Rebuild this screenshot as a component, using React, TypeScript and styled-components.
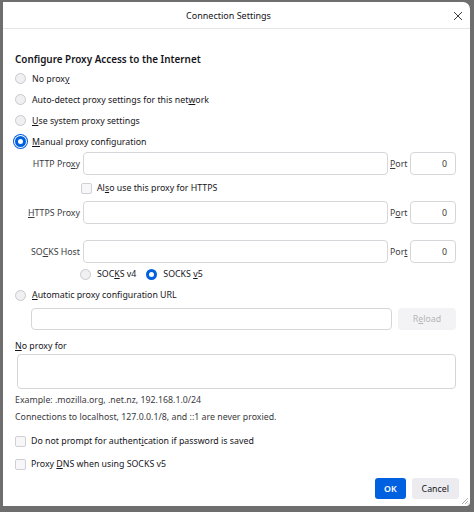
import styled, { createGlobalStyle } from 'styled-components';

const GlobalStyle = createGlobalStyle`
  html, body {
    margin: 0;
    padding: 0;
    background: #6e6e6e;
  }
  body {
    font-family: "Noto Sans", "Open Sans", sans-serif;
    color: #15141a;
  }
`;

const Screen = styled.div`
  width: 474px;
  height: 512px;
  padding: 2px 4px 6px 3px;
  box-sizing: border-box;
  background: #6e6e6e;
`;

const Dialog = styled.div`
  position: relative;
  height: 100%;
  background: #fff;
  border-radius: 0 7px 4px 0;
  display: flex;
  flex-direction: column;
  overflow: hidden;
  font-size: 8.8px;
`;

const TitleBar = styled.div`
  height: 26px;
  flex: none;
  display: flex;
  align-items: center;
  justify-content: center;
  position: relative;
  padding-right: 16px;
  border-bottom: 1px solid #e6e6e6;
  font-size: 9px;
`;

const CloseButton = styled.div`
  position: absolute;
  right: 7px;
  top: 9px;
  width: 10px;
  height: 10px;
  display: flex;
`;

const Body = styled.div`
  display: flex;
  flex-direction: column;
  padding: 0 14px 0 12px;
`;

const Heading = styled.div`
  margin-top: 22px;
  height: 16px;
  line-height: 16px;
  font-size: 9.9px;
  font-weight: 600;
`;

const Row = styled.div<{ $h: number; $mt?: number; $indent?: number }>`
  display: flex;
  align-items: center;
  height: ${({ $h }) => $h}px;
  margin-top: ${({ $mt = 0 }) => $mt}px;
  padding-left: ${({ $indent = 0 }) => $indent}px;
  flex: none;
`;

const RadioDot = styled.span<{ $checked?: boolean; $focused?: boolean }>`
  box-sizing: border-box;
  width: 11px;
  height: 11px;
  border-radius: 50%;
  flex: none;
  margin-right: 6px;
  background: ${({ $checked }) => ($checked ? '#fff' : '#f0f0f3')};
  border: ${({ $checked }) => ($checked ? '3px solid #0061e0' : '1px solid #c9c9cf')};
  box-shadow: ${({ $focused }) => ($focused ? '0 0 0 1px #fff, 0 0 0 2px #0061e0' : 'none')};
`;

const CheckBox = styled.span`
  box-sizing: border-box;
  width: 11px;
  height: 11px;
  border-radius: 2px;
  flex: none;
  margin-right: 5px;
  background: #f7f7f9;
  border: 1px solid #cfcfd5;
`;

const Label = styled.span<{ $muted?: boolean }>`
  white-space: nowrap;
  color: ${({ $muted }) => ($muted ? '#3a3a40' : '#15141a')};
`;

const U = styled.span`
  text-decoration: underline;
  text-underline-offset: 1px;
`;

const FieldLabel = styled.span`
  width: 65px;
  flex: none;
  text-align: right;
  white-space: nowrap;
  color: #3a3a40;
  margin-right: 3px;
`;

const TextBox = styled.div<{ $w?: number }>`
  box-sizing: border-box;
  height: 100%;
  flex: ${({ $w }) => ($w ? 'none' : '1')};
  width: ${({ $w }) => ($w ? `${$w}px` : 'auto')};
  border: 1px solid #d6d6da;
  border-radius: 4px;
  background: #fff;
  display: flex;
  align-items: center;
  justify-content: flex-end;
  padding-right: 8px;
  color: #3a3a40;
`;

const PortLabel = styled.span`
  flex: none;
  width: 20px;
  padding-left: 2px;
  color: #3a3a40;
`;

const RadioPair = styled.span`
  display: flex;
  align-items: center;
  margin-right: 10px;
`;

const ReloadButton = styled.div`
  flex: none;
  width: 58px;
  height: 100%;
  margin-left: 6px;
  border-radius: 4px;
  background: #f3f3f5;
  color: #b4b4b8;
  display: flex;
  align-items: center;
  justify-content: center;
`;

const TextArea = styled.div`
  box-sizing: border-box;
  height: 35px;
  margin: 0 0 0 2px;
  border: 1px solid #d6d6da;
  border-radius: 4px;
`;

const Footer = styled.div`
  display: flex;
  justify-content: flex-end;
  gap: 6px;
  height: 21px;
  margin: 3px -3px 0 0;
`;

const Button = styled.div<{ $primary?: boolean }>`
  box-sizing: border-box;
  height: 21px;
  padding: 0 ${({ $primary }) => ($primary ? 9 : 10)}px;
  border-radius: 3px;
  display: flex;
  align-items: center;
  justify-content: center;
  background: ${({ $primary }) => ($primary ? '#0061e0' : '#ececf0')};
  color: ${({ $primary }) => ($primary ? '#fff' : '#15141a')};
  font-weight: ${({ $primary }) => ($primary ? 600 : 400)};
`;

const Grip = styled.svg`
  position: absolute;
  right: 1px;
  bottom: 1px;
`;

const Radio = ({ checked, children }: { checked?: boolean; children: React.ReactNode }) => (
  <>
    <RadioDot $checked={checked} $focused={checked} />
    <Label>{children}</Label>
  </>
);

const App = (): JSX.Element => {
  return (
    <Screen>
      <GlobalStyle />
      <Dialog>
        <TitleBar>
          Connection Settings
          <CloseButton>
            <svg width="10" height="10" viewBox="0 0 10 10">
              <path d="M1 1L9 9M9 1L1 9" stroke="#3a3a40" strokeWidth="1" fill="none" />
            </svg>
          </CloseButton>
        </TitleBar>
        <Body>
          <Heading>Configure Proxy Access to the Internet</Heading>
          <Row $h={21} $mt={1}><Radio>No prox<U>y</U></Radio></Row>
          <Row $h={21}><Radio>Auto-detect proxy settings for this net<U>w</U>ork</Radio></Row>
          <Row $h={21}><Radio><U>U</U>se system proxy settings</Radio></Row>
          <Row $h={21}><Radio checked><U>M</U>anual proxy configuration</Radio></Row>

          <Row $h={23}>
            <FieldLabel>HTTP Pro<U>x</U>y</FieldLabel>
            <TextBox />
            <PortLabel><U>P</U>ort</PortLabel>
            <TextBox $w={46}>0</TextBox>
          </Row>
          <Row $h={26} $indent={66}>
            <CheckBox />
            <Label>Al<U>s</U>o use this proxy for HTTPS</Label>
          </Row>
          <Row $h={23}>
            <FieldLabel><U>H</U>TTPS Proxy</FieldLabel>
            <TextBox />
            <PortLabel>P<U>o</U>rt</PortLabel>
            <TextBox $w={46}>0</TextBox>
          </Row>
          <Row $h={23} $mt={16}>
            <FieldLabel>SO<U>C</U>KS Host</FieldLabel>
            <TextBox />
            <PortLabel>Por<U>t</U></PortLabel>
            <TextBox $w={46}>0</TextBox>
          </Row>
          <Row $h={22} $indent={65}>
            <RadioPair><RadioDot /><Label>SOC<U>K</U>S v4</Label></RadioPair>
            <RadioPair><RadioDot $checked /><Label>SOCKS <U>v</U>5</Label></RadioPair>
          </Row>
          <Row $h={20}><Radio><U>A</U>utomatic proxy configuration URL</Radio></Row>
          <Row $h={22} $mt={3} $indent={16}>
            <TextBox />
            <ReloadButton>R<U>e</U>load</ReloadButton>
          </Row>
          <Row $h={16} $mt={8}><Label><U>N</U>o proxy for</Label></Row>
          <TextArea />
          <Row $h={16} $mt={3}><Label $muted>Example: .mozilla.org, .net.nz, 192.168.1.0/24</Label></Row>
          <Row $h={16} $mt={1}><Label $muted>Connections to localhost, 127.0.0.1/8, and ::1 are never proxied.</Label></Row>
          <Row $h={22} $mt={5}>
            <CheckBox />
            <Label>Do not prompt for authent<U>i</U>cation if password is saved</Label>
          </Row>
          <Row $h={22} $mt={1}>
            <CheckBox />
            <Label>Proxy <U>D</U>NS when using SOCKS v5</Label>
          </Row>
          <Footer>
            <Button $primary>OK</Button>
            <Button>Cancel</Button>
          </Footer>
        </Body>
        <Grip width="8" height="8" viewBox="0 0 8 8">
          <path d="M7 1L1 7M7 4L4 7M7 6.5L6.5 7" stroke="#9a9a9a" strokeWidth="0.8" />
        </Grip>
      </Dialog>
    </Screen>
  );
};

export default App;
